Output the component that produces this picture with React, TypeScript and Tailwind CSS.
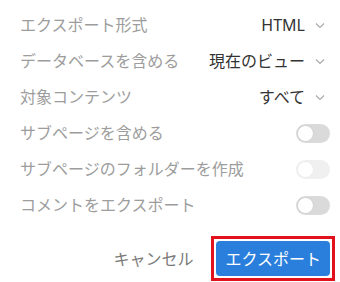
import React from "react";

const font = { fontFamily: '"Noto Sans", "Noto Sans CJK JP", sans-serif' };

function Chevron() {
  return (
    <svg width="12" height="12" viewBox="0 0 12 12" className="ml-[9px] mr-[4px]">
      <path d="M2 4.5 L6 8.5 L10 4.5" fill="none" stroke="#a8a8a8" strokeWidth="1.1" />
    </svg>
  );
}

function Toggle({ disabled }: { disabled?: boolean }) {
  return (
    <div
      className={
        "w-[34px] h-[19px] rounded-full flex items-center px-[1px] " +
        (disabled ? "bg-[#f0f0f0]" : "bg-[#dadada]")
      }
    >
      <div
        className={
          "w-[17px] h-[17px] rounded-full bg-white border " +
          (disabled ? "border-[#ececec]" : "border-[#cfcfcf]")
        }
      />
    </div>
  );
}

export default function App() {
  const rows: { label: string; value?: string; toggle?: "on" | "dis" }[] = [
    { label: "エクスポート形式", value: "HTML" },
    { label: "データベースを含める", value: "現在のビュー" },
    { label: "対象コンテンツ", value: "すべて" },
    { label: "サブページを含める", toggle: "on" },
    { label: "サブページのフォルダーを作成", toggle: "dis" },
    { label: "コメントをエクスポート", toggle: "on" },
  ];
  return (
    <div className="w-[340px] h-[282px] bg-white pl-[20px] pr-[10px] pt-[7px] overflow-hidden" style={font}>
      {rows.map((r) => (
        <div key={r.label} className="h-[36px] flex items-center justify-between">
          <span className="text-[16px] text-[#9d9d9d] leading-none">{r.label}</span>
          {r.value ? (
            <div className="flex items-center">
              <span className="text-[16px] text-[#333333] leading-none">{r.value}</span>
              <Chevron />
            </div>
          ) : (
            <Toggle disabled={r.toggle === "dis"} />
          )}
        </div>
      ))}
      <div className="mt-[13px] flex items-center justify-end pr-[-5px] mr-[-5px]">
        <span className="text-[16px] text-[#7a7a7a] leading-none mr-[18px]">キャンセル</span>
        <div className="border-[3px] border-[#e1121c] p-[2px]">
          <button className="h-[35px] px-[9px] rounded-[4px] bg-[#2b7fdc] text-white text-[16px] leading-none" style={font}>
            エクスポート
          </button>
        </div>
      </div>
    </div>
  );
}
